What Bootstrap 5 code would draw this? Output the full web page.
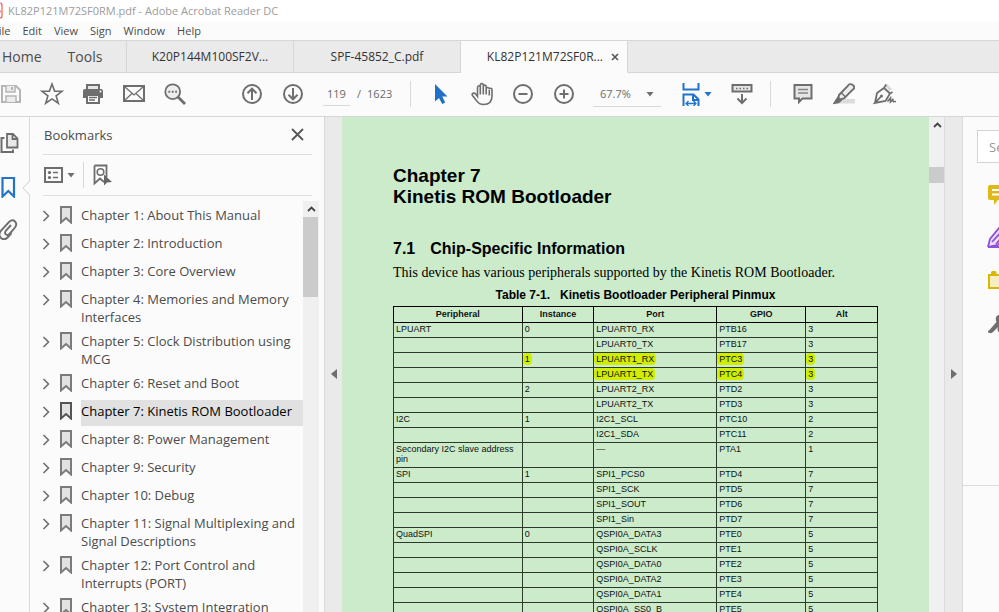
<!DOCTYPE html>
<html lang="en">
<head>
<meta charset="utf-8">
<meta name="viewport" content="width=device-width, initial-scale=1">
<title>KL82P121M72SF0RM.pdf - Adobe Acrobat Reader DC</title>
<link href="https://cdn.jsdelivr.net/npm/bootstrap@5.3.0/dist/css/bootstrap.min.css" rel="stylesheet">
<style>
body{font-family:"Open Sans","Noto Sans",sans-serif;font-size:13px;line-height:18px;color:#4b4b4b;background:#fbfbfb}
button,input,select{font:inherit;color:inherit;background:none;border:0;padding:0}
svg{display:block;flex:none}
a{color:inherit;text-decoration:none}
.ln{fill:none;stroke:#6e6e6e;stroke-width:2}
.thin{stroke-width:1.6}
.titlebar{height:21px;background:#fff;color:#9c9c9c;font-size:11px;gap:5px}
.menubar{height:19px;font-size:11px;gap:12px;margin-left:-7px}
.tabbar{height:33px;background:#eaeaea;border-top:1px solid #d6d6d6}
.tabbar>*{border-bottom:1px solid #d6d6d6}
.doctab{width:167px;border-right:1px solid #d6d6d6;font-size:12px;color:#333}
.doctab.open{background:#fbfbfb;border-bottom-color:#fbfbfb}
.home{width:127px;font-size:14px;gap:26px;border-right:1px solid #d6d6d6;padding-left:2px}
.toolbar{height:44px;border-bottom:1px solid #d6d6d6;font-size:12px;color:#6a6a6a;padding-bottom:1px}
.tools{gap:17px}
.tool{width:24px;height:24px;flex:none;display:flex;align-items:center;justify-content:center}
.first{margin-left:-1px}
.pages{margin-left:53px}
.page-no{width:27px;height:24px;border-bottom:1px solid #d9d9d9;padding-left:4px;font-size:11px;margin-left:18px}
.total{font-size:11px;gap:6px;padding-left:7px;width:60px}
.sep{width:1px;height:26px;background:#d9d9d9;flex:none}
.modes{margin-left:18px}
.zoom{width:68px;height:26px;margin:0 18px 0 17px}
.zoom select{appearance:none;width:100%;height:100%;border-bottom:1px solid #d9d9d9;padding-left:7px;font-size:11px;border-radius:0}
.zoom svg{position:absolute;right:7px;top:11px;pointer-events:none}
.fit{gap:1px;margin-right:18px}
.marks{margin-left:20px;gap:17px}
.rail{width:30px;flex:none;border-right:1px solid #d9d9d9;position:relative;padding-top:14px}
.rail button{display:block;height:24px;margin:0 0 19px}
.notch{position:absolute;right:-1px;top:64px}
.side{width:295px;flex:none;border-right:1px solid #d9d9d9}
.side-head{height:38px;margin:0 12px 0 13px;border-bottom:1px solid #dedede;padding:0 8px 2px 1px}
.side-tools{height:41px;margin:0 12px 0 13px;border-bottom:1px solid #dedede}
.side-list{margin-top:5px}
.entries{padding:3px 0 0 11px}
.entry{margin-bottom:2px}
.entry button{width:14px;height:22px;flex:none}
.entry .name{margin-left:9px;padding:2px 0;min-height:26px}
.entry.now .name{background:#e1e1e1;color:#000}
.entry .flag{margin:2px 0 0 5px;fill:#e2e2e2;stroke:#7b7b7b;stroke-width:2}
.entry.now .flag{stroke:#555}
.entry .chev{margin-top:1px}
.bar{width:16px;flex:none;background:#f0f0f0}
.side .bar{margin-right:5px}
.bar .up{height:16px;width:16px;display:grid;place-items:center}
.knob{background:#cbcbcb}
.side .knob{height:80px;width:15px}
.doc-bar .knob{height:16px;margin-top:34px}
.doc-bar{border-right:1px solid #dcdcdc}
.gutter{width:17px;flex:none;background:#eaeaea;display:grid;place-items:center}
.gutter button{margin-bottom:-18px}
.sheet{background:#cbebcb;color:#000;font-family:"Liberation Sans",Arial,sans-serif;padding:48px 51px 0;min-width:0}
.sheet h1{font-size:19px;line-height:21px;font-weight:700;margin:0 0 32px}
.sheet h2{font-size:16px;line-height:20px;font-weight:700;margin:0;display:flex;gap:15px}
.sheet p{font-family:"Liberation Serif","Times New Roman",serif;font-size:14px;line-height:18px;margin:5px 0 6px;white-space:nowrap}
.pins{width:100%;table-layout:fixed;border-collapse:collapse;font-size:9px;line-height:10px;color:#111;caption-side:top}
.pins caption{color:#000;font-weight:700;font-size:12px;line-height:14px;padding:0 0 4px;text-align:center;white-space:pre}
.pins th,.pins td{border:1px solid #2b3a2b;padding:1px 2px 3px;height:15px;vertical-align:top}
.pins th{border-color:#000;text-align:center;padding:2px 1px 3px}
.pins .hl{background:#d0ee00;border-radius:4px;padding:1px 2px;margin:0 -2px}
.right{width:37px;flex:none;border-left:1px solid #d9d9d9}
.right-top{height:369px;border-bottom:1px solid #dcdcdc;padding-top:13px}
.search{display:block;width:200px;height:33px;border:1px solid #d3d3d3;background:#fff;margin:0 0 20px 14px;padding-left:11px}
.search::placeholder{color:#999;opacity:1}
.right-top button{display:block;height:24px;margin:0 0 19px 24px}
</style>
<script src="https://cdn.jsdelivr.net/npm/bootstrap@5.3.0/dist/js/bootstrap.bundle.min.js"></script>
</head>
<body class="vh-100 overflow-hidden d-flex flex-column">
<header class="flex-shrink-0">
<div class="titlebar d-flex align-items-center overflow-hidden">
<svg width="3" height="18" viewBox="0 0 3 18"><path d="M-8 3q0-2 2-2H0q2 0 2 2V14q0 2-2 2h-6M-6 10q5-3 6-1t-4 1" fill="none" stroke="#ee5a5a" stroke-width="1.2"/></svg>
<span>KL82P121M72SF0RM.pdf - Adobe Acrobat Reader DC</span>
</div>
<nav class="menubar d-flex align-items-center" aria-label="Menu">
<a href="#">File</a><a href="#">Edit</a><a href="#">View</a><a href="#">Sign</a><a href="#">Window</a><a href="#">Help</a>
</nav>
<nav class="tabbar d-flex" aria-label="Documents">
<div class="home d-flex align-items-center flex-shrink-0"><a href="#">Home</a><a href="#">Tools</a></div>
<a href="#" class="doctab d-flex align-items-center justify-content-center flex-shrink-0">K20P144M100SF2V...</a>
<a href="#" class="doctab d-flex align-items-center justify-content-center flex-shrink-0">SPF-45852_C.pdf</a>
<div class="doctab open d-flex align-items-center justify-content-end flex-shrink-0 pe-2"><a href="#" class="me-2">KL82P121M72SF0R...</a><button aria-label="Close tab"><svg width="8" height="8" viewBox="0 0 8 8"><path d="M1 1l6 6M7 1L1 7" fill="none" stroke="#555" stroke-width="1.6"/></svg></button></div>
<div class="flex-grow-1"></div>
</nav>
<div class="toolbar d-flex align-items-center">
<div class="tools first d-flex">
<button class="tool" aria-label="Save"><svg width="20" height="20" viewBox="0 0 20 20" fill="none" stroke="#b5b5b5" stroke-width="2"><path d="M1 2H15L19 6V18H1z"/><path d="M5 2V8H14V2M5 18V12H15V18" stroke-width="1.5" fill="#ececec"/><path d="M11 3v3"/></svg></button>
<button class="tool" aria-label="Star"><svg width="24" height="24" viewBox="0 0 24 24"><path d="M12 2l2.6 7.1 7.4.2-5.9 4.5 2.2 7.4L12 16.9l-6.3 4.3 2.2-7.4L2 9.3l7.4-.2z" class="ln thin"/></svg></button>
<button class="tool" aria-label="Print"><svg width="22" height="22" viewBox="0 0 22 22"><path d="M5 6V2H17V6" fill="#e5e5e5" stroke="#6e6e6e" stroke-width="2"/><path d="M1 8q0-2 2-2H19q2 0 2 2V15H1z" fill="#6e6e6e"/><path d="M5 12H17V20H5z" fill="#fff" stroke="#6e6e6e" stroke-width="2"/><path d="M7 14.5H15M7 17H13" stroke="#6e6e6e" stroke-width="1.4"/><circle cx="18.5" cy="8.5" r="1" fill="#fff"/></svg></button>
<button class="tool" aria-label="Mail"><svg width="22" height="18" viewBox="0 0 22 18"><path d="M1 1H21V16H1z" class="ln"/><path d="M2 2l9 8 9-8M2 15l7-6.5M20 15l-7-6.5" fill="none" stroke="#6e6e6e" stroke-width="1.3"/></svg></button>
<button class="tool" aria-label="Search"><svg width="22" height="22" viewBox="0 0 22 22"><circle cx="8.7" cy="8.7" r="7.4" fill="#eee" stroke="#6e6e6e" stroke-width="1.8"/><path d="M14 14l7 7" fill="none" stroke="#6e6e6e" stroke-width="2.8"/><path d="M4.4 8.7h1.8M7.8 8.7h1.8M11.2 8.7H13" class="ln"/></svg></button>
</div>
<div class="tools pages d-flex">
<button class="tool" aria-label="Previous page"><svg width="22" height="22" viewBox="0 0 22 22"><circle cx="11" cy="11" r="9" class="ln"/><path d="M11 17V6M6.5 10.2L11 5.7l4.5 4.5" class="ln"/></svg></button>
<button class="tool" aria-label="Next page"><svg width="22" height="22" viewBox="0 0 22 22"><circle cx="11" cy="11" r="9" class="ln"/><path d="M11 5V16M6.5 11.8L11 16.3l4.5-4.5" class="ln"/></svg></button>
</div>
<input class="page-no" value="119" aria-label="Page number">
<div class="total d-flex"><span>/</span><span>1623</span></div>
<div class="sep"></div>
<div class="tools modes d-flex">
<button class="tool" aria-label="Select"><svg width="14" height="22" viewBox="0 0 14 22"><path d="M1 1V18.5L5 15l3.2 6 3-1.5L8.3 13.5H13.5z" fill="#2070c8"/></svg></button>
<button class="tool" aria-label="Hand"><svg width="22" height="24" viewBox="0 0 22 24"><path d="M6.5 14.5V5.5q0-1.7 1.4-1.7t1.4 1.7V3.3q0-1.8 1.5-1.8t1.5 1.8v1.5q0-1.7 1.4-1.7t1.5 1.7V7q0-1.5 1.4-1.5T18.5 7.3q0-1 1.2-1.1T21 7.7V14q0 8.5-8.5 8.5-4.5 0-6.5-3.3L1.5 13.5q-.9-1.6.5-2.2t2.6.6zM9.3 5v7.5M12.3 4.5v8M15.2 6v6.5M18.3 8v5.5" class="ln thin"/></svg></button>
<button class="tool" aria-label="Zoom out"><svg width="22" height="22" viewBox="0 0 22 22"><circle cx="11" cy="11" r="9" class="ln"/><path d="M6.5 11H15.5" class="ln"/></svg></button>
<button class="tool" aria-label="Zoom in"><svg width="22" height="22" viewBox="0 0 22 22"><circle cx="11" cy="11" r="9" class="ln"/><path d="M6.5 11H15.5M11 6.5V15.5" class="ln"/></svg></button>
</div>
<div class="zoom position-relative flex-shrink-0"><select aria-label="Zoom level"><option>67.7%</option></select><svg width="8" height="5" viewBox="0 0 8 5"><path d="M0.5 0H7.5L4 4.5z" fill="#6e6e6e"/></svg></div>
<button class="fit d-flex align-items-center" aria-label="Fit width"><svg width="24" height="24" viewBox="0 0 24 24" fill="none" stroke="#2273cb" stroke-width="2"><path d="M4.5 1V7.5H19.5V1M4.5 24V12.5H14.5L19.5 17.5V24M14 12.5V18H19.5"/><path d="M7.5 21.5H16.5M9.5 19l-2.5 2.5 2.5 2.5M14.5 19l2.5 2.5-2.5 2.5" stroke-width="1.3"/></svg><svg width="8" height="5" viewBox="0 0 8 5"><path d="M0.5 0H7.5L4 4.5z" fill="#2273cb"/></svg></button>
<button class="tool me-3" aria-label="Read mode"><svg width="22" height="22" viewBox="0 0 22 22"><path d="M1.5 2H20.5V8.5H1.5z" fill="#e5e5e5" stroke="#6e6e6e" stroke-width="2"/><path d="M5 5.5h1.5M8.5 5.5H10M12 5.5h1.5M15.5 5.5H17" class="ln thin"/><path d="M11 11V19.5M6.5 15.5L11 20l4.5-4.5" class="ln"/></svg></button>
<div class="sep"></div>
<div class="marks d-flex">
<button class="tool" aria-label="Comment"><svg width="20" height="20" viewBox="0 0 20 20"><path d="M1.5 1H18.5V14.5H9.5L6 18V14.5H1.5z" fill="#e5e5e5" stroke="#6e6e6e" stroke-width="2"/><path d="M5 5.5H15M5 9H15" stroke="#858585" stroke-width="1.3"/></svg></button>
<button class="tool" aria-label="Highlight"><svg width="22" height="22" viewBox="0 0 22 22"><path d="M8 16H22V20.5H5z" fill="#dcdcdc"/><path d="M6 12L14.8 2.8Q17-.2 20 2.3T19.3 7L11 15.5 6.8 16.5 5.5 15z" fill="#eee" stroke="#6e6e6e" stroke-width="1.9"/><path d="M8 9.5L13 14.5M4.8 14.5L8 17.5 5.5 19.5 1 20.3z" fill="#6e6e6e" stroke="#6e6e6e" stroke-width="1.5"/></svg></button>
<button class="tool" aria-label="Sign"><svg width="24" height="22" viewBox="0 0 24 22"><path d="M12 3L14 1 19 6 16.5 8z" fill="#d8d8d8"/><path d="M2 20L4 10 11 5 17 10.5 12.5 18 2 20l6-6.5M11 5l2.2-3.5M17 10.5l2.5-1.5" fill="none" stroke="#6e6e6e" stroke-width="1.8"/><circle cx="8.5" cy="13" r="1.5" fill="#6e6e6e"/><path d="M14.5 18.5l3-3.5v4l2.3-2.5.7 2.2 2.5-.2" class="ln thin"/></svg></button>
</div>
</div>
</header>
<main class="doc d-flex flex-grow-1 overflow-hidden">
<nav class="rail" aria-label="Panels">
<button aria-label="Pages"><svg width="20" height="22" viewBox="0 0 20 22"><path d="M7 2H13L17.5 6.5V15.5H7zM12.5 2V7H17.5" fill="#e8e8e8" stroke="#6e6e6e" stroke-width="1.8"/><path d="M4.5 6H1.5V20H13V17.5" class="ln"/></svg></button>
<button aria-label="Bookmarks"><svg width="16" height="24" viewBox="0 0 16 24"><path d="M2.5 4H14V22.5L8.3 17 2.5 22.5z" fill="none" stroke="#2273cb" stroke-width="2.2"/></svg></button>
<button aria-label="Attachments"><svg width="18" height="22" viewBox="0 0 18 22"><path d="M11 7L6 12.5q-2 2.8 0 4t3.5-.5L15 9.5Q17.5 6 15 3.5T9 4L1.5 12Q-2.5 17 1 20T8 19L11.5 15" fill="none" stroke="#6e6e6e" stroke-width="1.9"/></svg></button>
<svg class="notch" width="8" height="14" viewBox="0 0 8 14"><path d="M8 0L1 7 8 14z" fill="#fbfbfb"/><path d="M7.5 0L1 7 7.5 14" fill="none" stroke="#cfcfcf"/></svg>
</nav>
<aside class="side d-flex flex-column">
<div class="side-head d-flex align-items-center justify-content-between flex-shrink-0"><span>Bookmarks</span><button aria-label="Close panel"><svg width="13" height="13" viewBox="0 0 13 13"><path d="M1 1L12 12M12 1L1 12" fill="none" stroke="#555" stroke-width="1.8"/></svg></button></div>
<div class="side-tools d-flex align-items-center flex-shrink-0">
<button class="d-flex align-items-center gap-1" aria-label="Options"><svg width="20" height="18" viewBox="0 0 20 18"><path d="M2 2H19V16H2z" class="ln"/><circle cx="6.5" cy="6.5" r="1.6" fill="#666"/><circle cx="6.5" cy="11.5" r="1.6" fill="#666"/><path d="M10 6.5H15M10 11.5H15" class="ln thin"/></svg><svg width="8" height="5" viewBox="0 0 8 5"><path d="M0.5 0H7.5L4 4.5z" fill="#6e6e6e"/></svg></button>
<div class="sep ms-2"></div>
<button class="ms-2" aria-label="Find current bookmark"><svg width="22" height="22" viewBox="0 0 22 22"><path d="M2.5 1.5H14.5V13M2.5 1.5V19.5L8 14.5 12 18" fill="none" stroke="#6e6e6e" stroke-width="1.8"/><circle cx="8.5" cy="8" r="3.3" class="ln thin"/><path d="M12 10.5V21.5L15 18.5 20 18z" fill="#666"/></svg></button>
</div>
<div class="side-list d-flex flex-grow-1 overflow-hidden">
<ul class="entries list-unstyled mb-0 flex-grow-1" id="entries"></ul>
<div class="bar"><div class="up"><svg width="9" height="6" viewBox="0 0 9 6"><path d="M1 5l3.5-3.5L8 5" fill="none" stroke="#444" stroke-width="1.8"/></svg></div><div class="knob"></div></div>
</div>
</aside>
<div class="gutter"><button aria-label="Hide left pane"><svg width="6" height="10" viewBox="0 0 6 10"><path d="M6 0V10L0 5z" fill="#6e6e6e"/></svg></button></div>
<article class="sheet flex-grow-1">
<h1>Chapter 7<br>Kinetis ROM Bootloader</h1>
<h2><span>7.1</span><span>Chip-Specific Information</span></h2>
<p>This device has various peripherals supported by the Kinetis ROM Bootloader.</p>
<table class="pins">
<caption>Table 7-1.   Kinetis Bootloader Peripheral Pinmux</caption>
<colgroup><col style="width:26.6%"><col style="width:14.8%"><col style="width:25.4%"><col style="width:18.4%"><col style="width:14.8%"></colgroup>
<thead><tr><th>Peripheral</th><th>Instance</th><th>Port</th><th>GPIO</th><th>Alt</th></tr></thead>
<tbody id="pins"></tbody>
</table>
</article>
<div class="bar doc-bar"><div class="up"><svg width="9" height="6" viewBox="0 0 9 6"><path d="M1 5l3.5-3.5L8 5" fill="none" stroke="#444" stroke-width="1.8"/></svg></div><div class="knob"></div></div>
<div class="gutter"><button aria-label="Hide right pane"><svg width="6" height="10" viewBox="0 0 6 10"><path d="M0 0V10L6 5z" fill="#6e6e6e"/></svg></button></div>
<aside class="right overflow-hidden">
<div class="right-top">
<input class="search" placeholder="Search" aria-label="Search tools">
<button aria-label="Comment"><svg width="22" height="22" viewBox="0 0 22 22"><path d="M1 3q0-2 2-2H20q1 0 1 2V14q0 2-2 2H11L7 21V16H3q-2 0-2-2z" fill="#dfb916"/><path d="M5 6H17M5 10.5H17" stroke="#fff" stroke-width="1.8"/></svg></button>
<button aria-label="Fill and sign"><svg width="22" height="22" viewBox="0 0 22 22"><path d="M1 20L3 12 12 1 20 8 11 18 1 20H12M5 15L15 4M9 17L18 7" fill="#eee0fa" stroke="#9250d8" stroke-width="1.8"/></svg></button>
<button aria-label="Organize"><svg width="22" height="22" viewBox="0 0 22 22"><path d="M2 5H21V18H2z" fill="#f5eec5" stroke="#d9b900" stroke-width="2"/><path d="M4 4V2.5Q4 1 5.5 1H8Q9.5 1 9.5 2.5V4z" fill="#d9b900"/></svg></button>
<button aria-label="More tools"><svg width="22" height="22" viewBox="0 0 22 22"><path d="M2 17.5L9.5 9Q7 3 13 1.5L12 6 15 9 20 7Q19 12 13 12L5.5 19.5Q3 21 1.5 19.5T2 17.5z" fill="#6e6e6e"/><circle cx="15.5" cy="16" r="5" fill="#6e6e6e"/></svg></button>
</div>
</aside>
</main>
<script>
const chapters=["About This Manual","Introduction","Core Overview","Memories and Memory Interfaces","Clock Distribution using MCG","Reset and Boot","Kinetis ROM Bootloader","Power Management","Security","Debug","Signal Multiplexing and Signal Descriptions","Port Control and Interrupts (PORT)","System Integration Module (SIM)"];
document.getElementById("entries").innerHTML=chapters.map((c,i)=>`<li class="entry d-flex align-items-start ${i===6?"now":""}"><button aria-label="Expand chapter ${i+1}"><svg class="chev" width="9" height="22" viewBox="0 0 9 22"><path d="M2.5 6L7.5 11 2.5 16" class="ln thin"/></svg></button><svg class="flag" width="12" height="18" viewBox="0 0 12 18"><path d="M1 1H11V16.5L6 12 1 16.5z"/></svg><a href="#" class="name flex-grow-1">Chapter ${i+1}: ${c}</a></li>`).join("");
const rows=[["LPUART","0","LPUART0_RX","PTB16","3"],["","","LPUART0_TX","PTB17","3"],["","1","LPUART1_RX","PTC3","3",1],["","","LPUART1_TX","PTC4","3",1],["","2","LPUART2_RX","PTD2","3"],["","","LPUART2_TX","PTD3","3"],["I2C","1","I2C1_SCL","PTC10","2"],["","","I2C1_SDA","PTC11","2"],["Secondary I2C slave address pin","","—","PTA1","1"],["SPI","1","SPI1_PCS0","PTD4","7"],["","","SPI1_SCK","PTD5","7"],["","","SPI1_SOUT","PTD6","7"],["","","SPI1_Sin","PTD7","7"],["QuadSPI","0","QSPI0A_DATA3","PTE0","5"],["","","QSPI0A_SCLK","PTE1","5"],["","","QSPI0A_DATA0","PTE2","5"],["","","QSPI0A_DATA2","PTE3","5"],["","","QSPI0A_DATA1","PTE4","5"],["","","QSPI0A_SS0_B","PTE5","5"]];
document.getElementById("pins").innerHTML=rows.map(r=>"<tr>"+r.slice(0,5).map(t=>`<td>${r[5]&&t?`<span class="hl">${t}</span>`:t}</td>`).join("")+"</tr>").join("");
</script>
</body>
</html>
